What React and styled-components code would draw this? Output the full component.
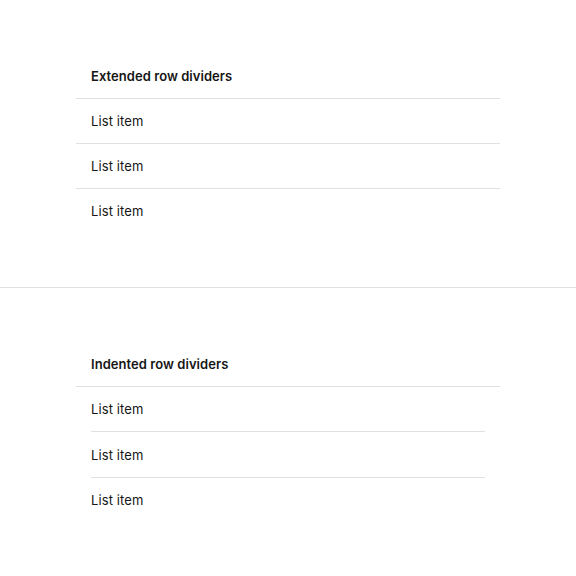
import React from "react";
import styled, { createGlobalStyle } from "styled-components";

const Global = createGlobalStyle`
  html, body { margin: 0; padding: 0; background: #ffffff; }
  body { font-family: "Inter", "Noto Sans", sans-serif; color: #161616; }
`;

const Section = styled.section`
  padding: 54px 76px 54px;
  & + & { padding-top: 53px; }
`;

const Rule = styled.hr`
  margin: 0;
  border: 0;
  height: 1px;
  background: #e0e0e0;
`;

const List = styled.div`
  display: flex;
  flex-direction: column;
`;

const Header = styled.div`
  height: 44px;
  display: flex;
  align-items: center;
  padding: 0 15px;
  font-size: 13px;
  font-weight: 600;
  letter-spacing: 0.05px;
  border-bottom: 1px solid #e0e0e0;
`;

const Item = styled.div`
  position: relative;
  height: ${(p) => (p.$tall ? "45px" : "44px")};
  display: flex;
  align-items: center;
  padding: 0 15px;
  font-size: 13px;
  font-weight: 400;
  letter-spacing: 0.1px;
  &:not(:last-child)::after {
    content: "";
    position: absolute;
    left: ${(p) => (p.$inset ? "15px" : "0")};
    right: ${(p) => (p.$inset ? "15px" : "0")};
    bottom: -1px;
    height: 1px;
    background: #e0e0e0;
  }
  & + & { margin-top: 1px; }
`;

function ContainedList({ title, inset }) {
  return (
    <List>
      <Header>{title}</Header>
      {["List item", "List item", "List item"].map((t, i) => (
        <Item key={i} $inset={inset} $tall={inset && i === 1}>{t}</Item>
      ))}
    </List>
  );
}

export default function App() {
  return (
    <>
      <Global />
      <Section>
        <ContainedList title="Extended row dividers" />
      </Section>
      <Rule />
      <Section>
        <ContainedList title="Indented row dividers" inset />
      </Section>
    </>
  );
}
